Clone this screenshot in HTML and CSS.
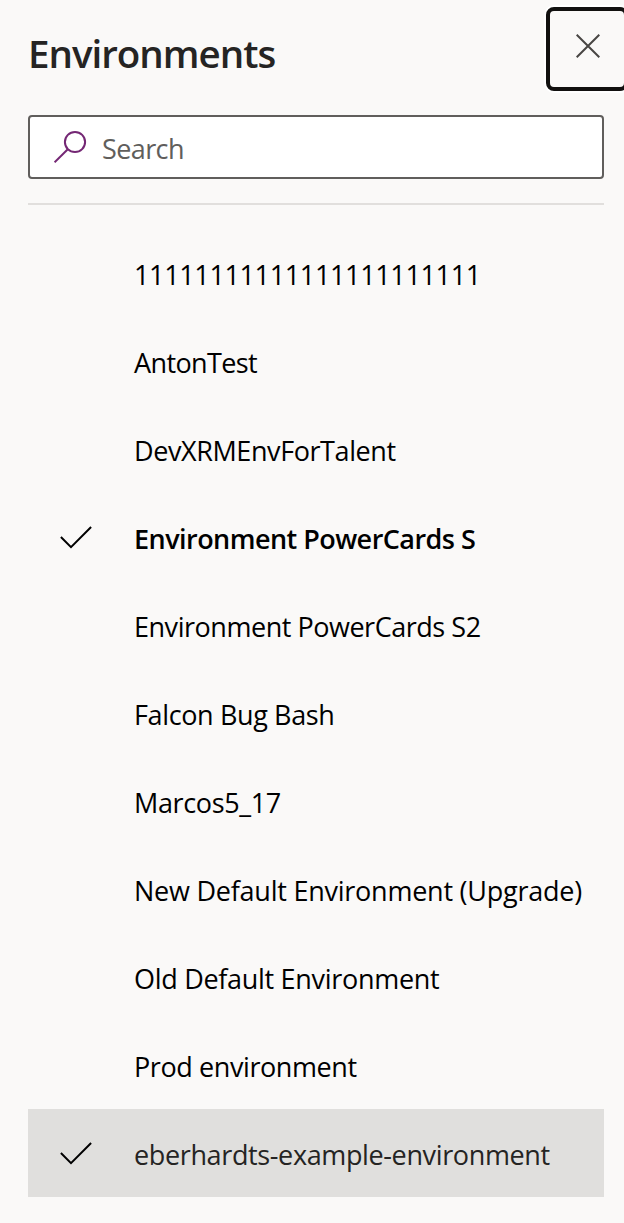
FILE: index.html
```html
<!DOCTYPE html>
<html lang="en">
<head>
<meta charset="utf-8">
<title>Environments</title>
<link rel="stylesheet" href="styles.css">
</head>
<body>
<main class="panel">
  <header class="header">
    <h1 class="title">Environments</h1>
    <button class="close" aria-label="Close"><svg width="24" height="24" viewBox="0 0 24 24"><path d="M.7.7 23.3 23.3M23.3.7.7 23.3"/></svg></button>
  </header>
  <div class="search">
    <svg class="search-icon" width="34" height="34" viewBox="0 0 34 34"><circle cx="21" cy="12" r="10.1"/><path d="M13.8 19.2.6 32.4"/></svg>
    <span class="placeholder">Search</span>
  </div>
  <hr class="divider">
  <ul class="list">
    <li class="row"><span class="check"></span><span class="name n1">11111111111111111111111</span></li>
    <li class="row"><span class="check"></span><span class="name n2">AntonTest</span></li>
    <li class="row"><span class="check"></span><span class="name n3">DevXRMEnvForTalent</span></li>
    <li class="row current"><span class="check"><svg width="32" height="24" viewBox="0 0 32 24"><path d="M.9 12 11 22.1 31.1 2"/></svg></span><span class="name n4">Environment PowerCards S</span></li>
    <li class="row"><span class="check"></span><span class="name n5">Environment PowerCards S2</span></li>
    <li class="row"><span class="check"></span><span class="name n6">Falcon Bug Bash</span></li>
    <li class="row"><span class="check"></span><span class="name n7">Marcos5_17</span></li>
    <li class="row"><span class="check"></span><span class="name n8">New Default Environment (Upgrade)</span></li>
    <li class="row"><span class="check"></span><span class="name n9">Old Default Environment</span></li>
    <li class="row"><span class="check"></span><span class="name n10">Prod environment</span></li>
    <li class="row hovered"><span class="check"><svg width="32" height="24" viewBox="0 0 32 24"><path d="M.9 12 11 22.1 31.1 2"/></svg></span><span class="name n11">eberhardts-example-environment</span></li>
  </ul>
</main>
</body>
</html>
```
FILE: styles.css
```css
* { box-sizing: border-box; }
body { margin: 0; background: #faf9f8; font-family: "Open Sans", "Noto Sans", sans-serif; color: #000; }
.panel { height: 1223px; padding-left: 28px; overflow: hidden; }
.header { display: flex; justify-content: space-between; height: 115px; }
.title { margin: 0; padding: 25px 0 0 0; font-size: 38.5px; line-height: 56px; font-weight: 600; letter-spacing: -1px; color: #252423; }
.close { flex: none; width: 82px; height: 84px; margin: 7px -4px 0 0; padding: 0 0 6px 2px; display: flex; align-items: center; justify-content: center; border: 4px solid #11100f; border-radius: 8px; background: transparent; box-shadow: 0 0 0 2px #fff; }
.close svg { fill: none; stroke: #484644; stroke-width: 2; }
.search { display: flex; align-items: center; width: 576px; height: 64px; padding-left: 24px; border: 2px solid #605e5c; border-radius: 4px; background: #fff; }
.search-icon { fill: none; stroke: #742774; stroke-width: 2; }
.placeholder { margin-left: 14px; padding-top: 2px; font-size: 27px; letter-spacing: -0.6px; color: #605e5c; }
.divider { width: 576px; height: 2px; margin: 24px 0; border: 0; background: #e1dfdd; }
.list { width: 576px; margin: 0; padding: 0; list-style: none; }
.row { display: flex; align-items: center; height: 88px; }
.check { flex: none; width: 106px; padding-left: 32px; }
.check svg { display: block; fill: none; stroke: #000; stroke-width: 2; }
.name { padding-top: 4px; font-size: 27px; line-height: 40px; white-space: nowrap; }
.n1 { letter-spacing: -0.36px; }
.n2 { letter-spacing: -0.62px; }
.n3 { letter-spacing: -0.41px; }
.n4 { letter-spacing: -0.54px; }
.n5 { letter-spacing: -0.47px; }
.n6 { letter-spacing: -0.37px; }
.n7 { letter-spacing: -0.36px; }
.n8 { letter-spacing: -0.24px; }
.n9 { letter-spacing: -0.3px; }
.n10 { letter-spacing: -0.41px; }
.n11 { letter-spacing: -0.37px; }
.current .name { font-weight: 600; }
.hovered { background: #e0dfdd; color: #252423; }
```
